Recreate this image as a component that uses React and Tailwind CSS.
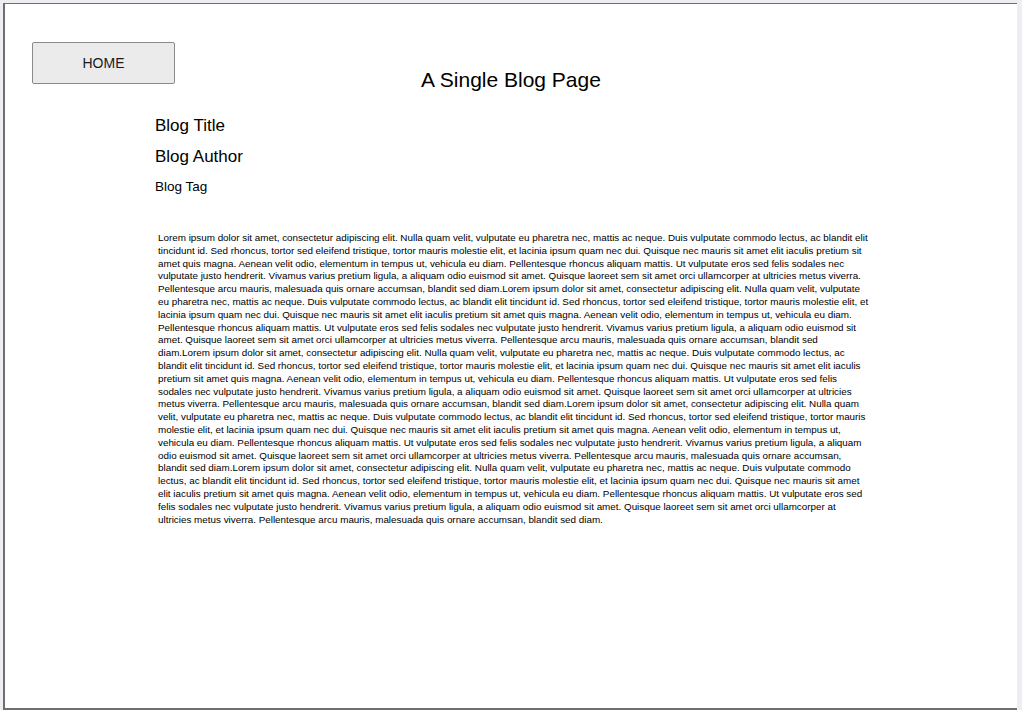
import React from "react";

const UNIT =
  "Lorem ipsum dolor sit amet, consectetur adipiscing elit. Nulla quam velit, vulputate eu pharetra nec, mattis ac neque. Duis vulputate commodo lectus, ac blandit elit tincidunt id. Sed rhoncus, tortor sed eleifend tristique, tortor mauris molestie elit, et lacinia ipsum quam nec dui. Quisque nec mauris sit amet elit iaculis pretium sit amet quis magna. Aenean velit odio, elementum in tempus ut, vehicula eu diam. Pellentesque rhoncus aliquam mattis. Ut vulputate eros sed felis sodales nec vulputate justo hendrerit. Vivamus varius pretium ligula, a aliquam odio euismod sit amet. Quisque laoreet sem sit amet orci ullamcorper at ultricies metus viverra. Pellentesque arcu mauris, malesuada quis ornare accumsan, blandit sed diam.";

const TEXT = UNIT + UNIT + UNIT + UNIT + UNIT;

export default function App() {
  return (
    <div
      className="h-[710px] w-full overflow-hidden bg-[#eceef1] pl-[3px] pt-[3px] text-black"
      style={{ fontFamily: '"Liberation Sans", Arial, sans-serif' }}
    >
      <div className="h-[707px] w-[1014px] border-l-2 border-t border-b-2 border-[#6f6f6f] bg-white">
        <div className="grid grid-cols-[1fr_auto_1fr]">
          <div className="pl-[27px] pt-[38px]">
            <button className="flex h-[42px] w-[143px] items-center justify-center rounded-[2px] border border-[#8a8a8a] bg-[#ebebeb] text-[14px] text-[#1a1a1a]">
              HOME
            </button>
          </div>
          <h1 className="pt-[64px] text-[21px] leading-[24px] font-normal">
            A Single Blog Page
          </h1>
          <div />
        </div>
        <div className="ml-[150px]">
          <h2 className="mt-[24px] text-[17px] leading-[20px] font-normal">Blog Title</h2>
          <h3 className="mt-[11px] text-[17px] leading-[20px] font-normal">Blog Author</h3>
          <p className="mt-[12px] text-[13.5px] leading-[16px]">Blog Tag</p>
          <p className="ml-[3px] mt-[37px] w-[712px] text-[9.86px] leading-[12.8px]">{TEXT}</p>
        </div>
      </div>
    </div>
  );
}
